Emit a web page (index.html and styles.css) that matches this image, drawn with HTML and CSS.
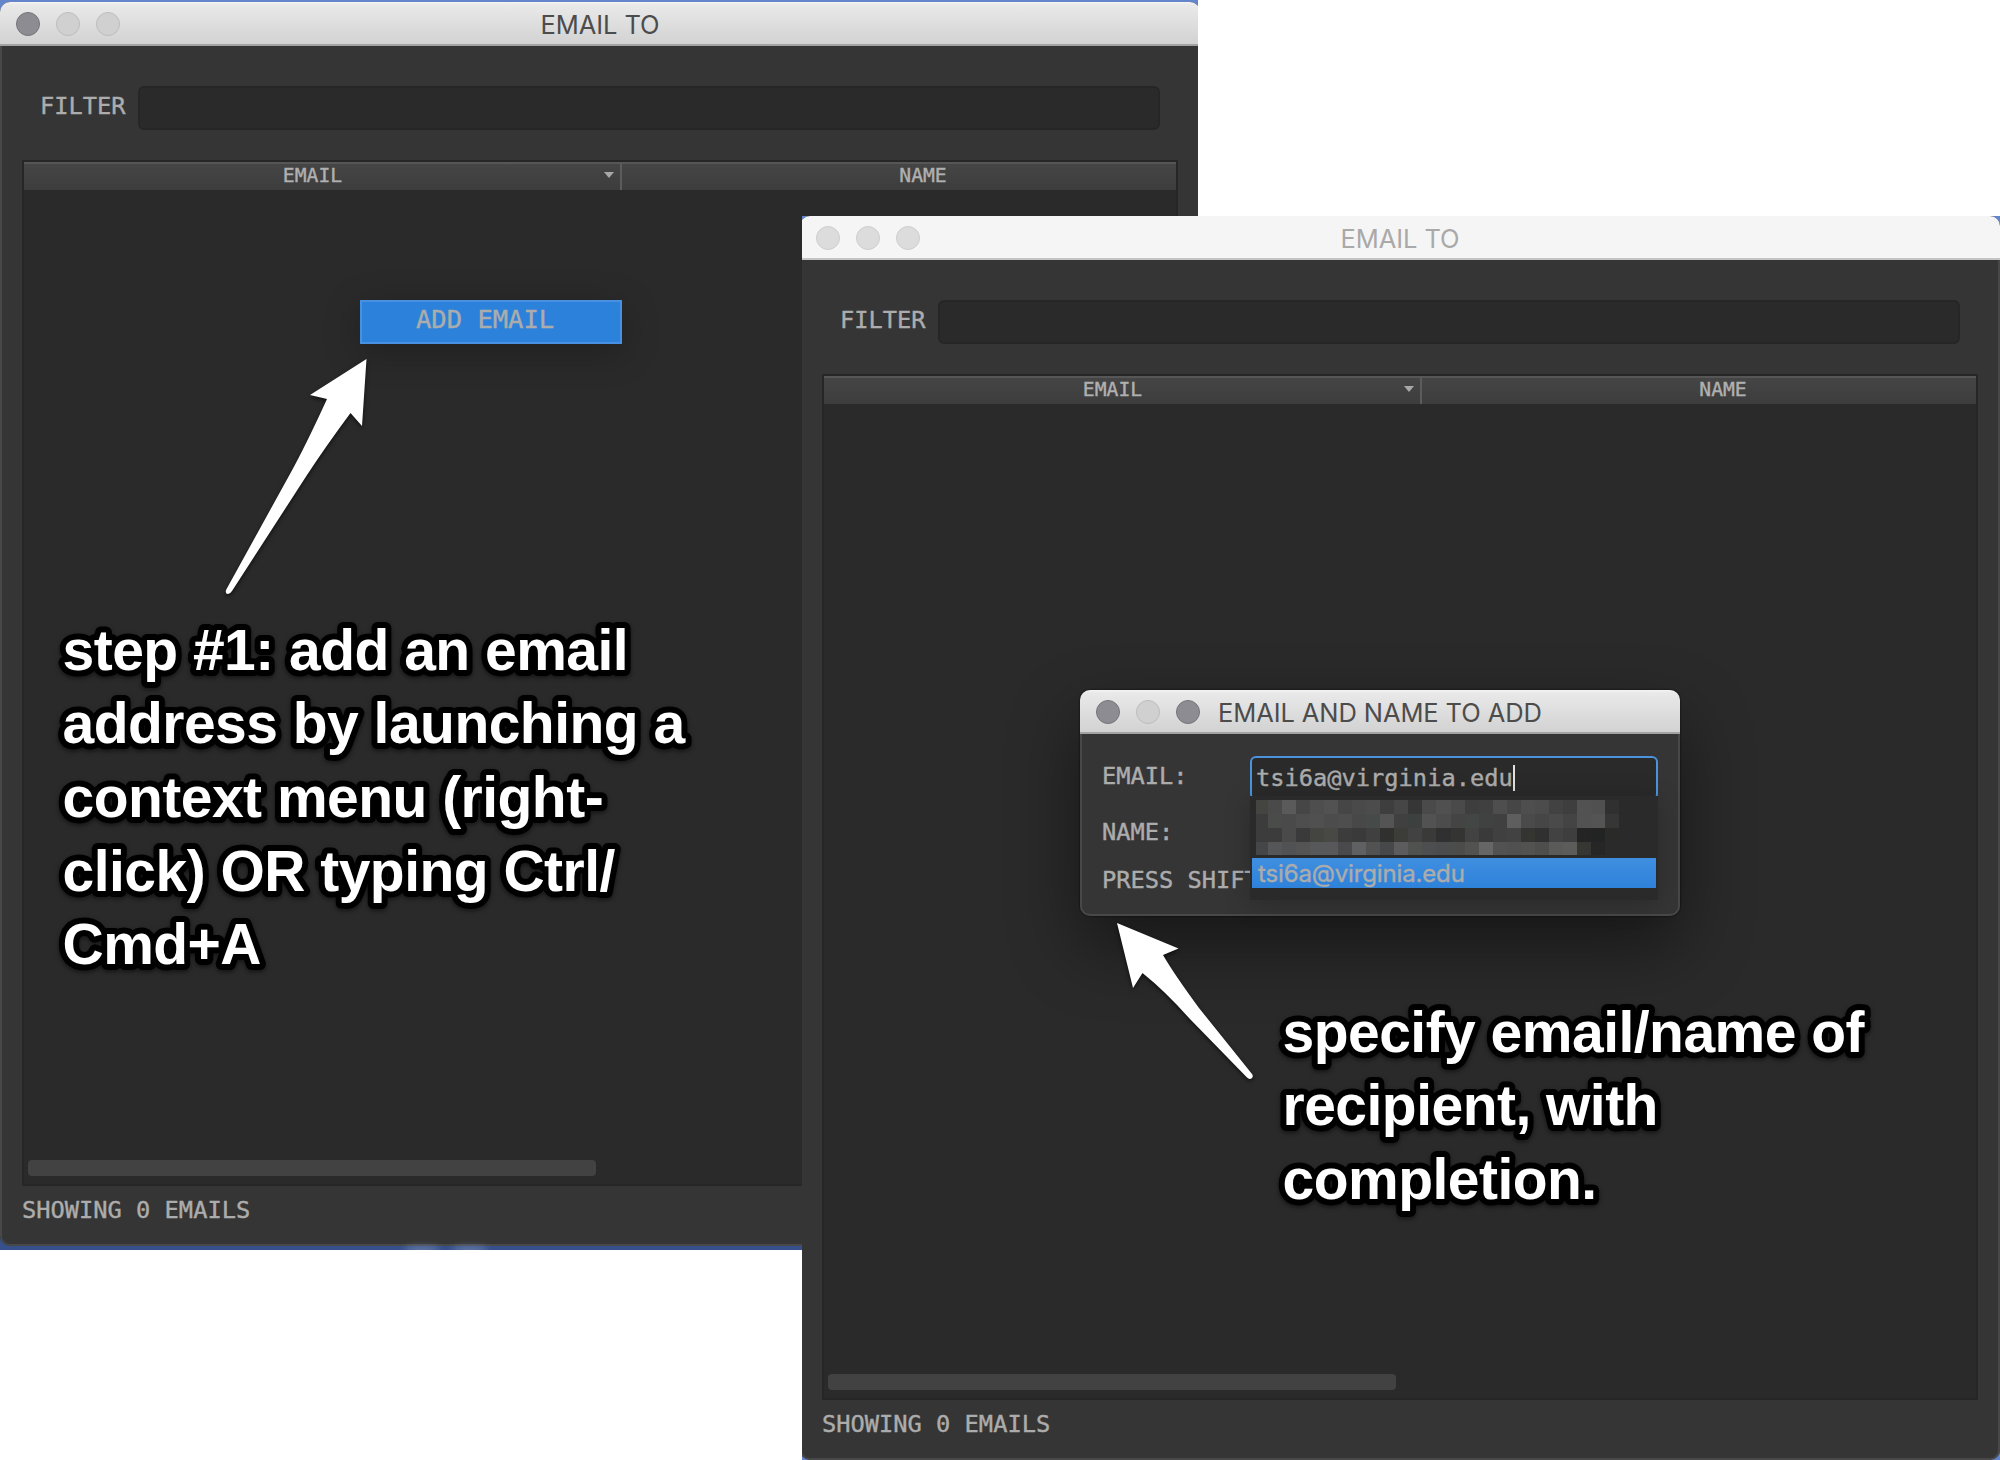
FILE: index.html
```html
<!DOCTYPE html>
<html lang="en">
<head>
<meta charset="utf-8">
<title>Email To</title>
<link rel="stylesheet" href="styles.css">
</head>
<body>
<main class="canvas">
  <section class="shot shot-first">
    <div class="window">
      <header class="titlebar">
        <div class="lights"><i class="light on"></i><i class="light"></i><i class="light"></i></div>
        <h1 class="title">EMAIL TO</h1>
      </header>
      <div class="body">
        <div class="filter"><span class="mono">FILTER</span><div class="field"></div></div>
        <div class="table">
          <div class="thead">
            <div class="th th-email">EMAIL<i class="sort"></i></div>
            <div class="th th-name">NAME</div>
          </div>
          <div class="rows"></div>
          <div class="scroll"></div>
        </div>
        <footer class="mono status">SHOWING 0 EMAILS</footer>
      </div>
    </div>
    <i class="glow glow-a"></i><i class="glow glow-b"></i>
  </section>
  <div class="menu">ADD EMAIL</div>

  <section class="shot shot-second">
    <div class="window">
      <header class="titlebar inactive">
        <div class="lights"><i class="light"></i><i class="light"></i><i class="light"></i></div>
        <h1 class="title">EMAIL TO</h1>
      </header>
      <div class="body">
        <div class="filter"><span class="mono">FILTER</span><div class="field"></div></div>
        <div class="table">
          <div class="thead">
            <div class="th th-email">EMAIL<i class="sort"></i></div>
            <div class="th th-name">NAME</div>
          </div>
          <div class="rows"></div>
          <div class="scroll"></div>
        </div>
        <footer class="mono status">SHOWING 0 EMAILS</footer>
      </div>
    </div>
  </section>

  <section class="dialog">
    <header class="titlebar dialog-bar">
      <div class="lights"><i class="light on"></i><i class="light"></i><i class="light on"></i></div>
      <h2 class="title dialog-title">EMAIL AND NAME TO ADD</h2>
    </header>
    <div class="form">
      <div class="form-row row-email">
        <label class="mono">EMAIL:</label>
        <div class="entry mono"><span>tsi6a@virginia.edu</span><i class="caret"></i></div>
      </div>
      <div class="mono row-name">NAME:</div>
      <div class="mono row-hint">PRESS SHIFT</div>
    </div>
    <div class="popup">
      <div class="mosaic" id="mosaic"></div>
      <div class="option"><span>tsi6a@virginia.edu</span></div>
    </div>
  </section>

  <svg class="annotations" width="2000" height="1460" viewBox="0 0 2000 1460">
    <g class="arrows">
      <path d="M366.5 359 L310 395 L327 399 Q305 447 290 474 L226 590 Q225 594 228 594 Q230 594 232 591 L307 475 Q326 446 350.5 413 L362 426 Z"/>
      <path d="M1117 923 L1133 988 L1142.500 973 Q1165 991 1189 1018 L1247 1077.500 Q1249.500 1080 1252 1078 Q1253.500 1076 1252 1074 L1199 1008 Q1174 974 1163 955 L1178.500 948.500 Z"/>
    </g>
    <text class="note" y="669.5">
      <tspan x="62.500">step #1: add an email</tspan>
      <tspan x="62.500" dy="73.670">address by launching a</tspan>
      <tspan x="62.500" dy="73.670">context menu (right-</tspan>
      <tspan x="62.500" dy="73.670">click) OR typing Ctrl/</tspan>
      <tspan x="62.500" dy="73.670">Cmd+A</tspan>
    </text>
    <text class="note" y="1051.5">
      <tspan x="1282.500">specify email/name of</tspan>
      <tspan x="1282.500" dy="73.670">recipient, with</tspan>
      <tspan x="1282.500" dy="73.670">completion.</tspan>
    </text>
  </svg>
</main>
<script src="mosaic.js"></script>
</body>
</html>
```
FILE: styles.css
```css
* { box-sizing: border-box; }

body {
  margin: 0;
  background: #fff;
}

.canvas {
  position: relative;
  width: 2000px;
  height: 1460px;
  overflow: hidden;
}

.shot {
  position: absolute;
  overflow: hidden;
  background: #6484cb;
}

.shot-first {
  left: 0;
  top: 0;
  width: 1198px;
  height: 1250px;
  padding-top: 2px;
  background: linear-gradient(#6484cb 0 50%, #35508a 50%);
}

.shot-second {
  left: 802px;
  top: 216px;
  width: 1198px;
  height: 1244px;
}

.shot-second .window { margin-left: -2px; }

.glow {
  position: absolute;
  top: 1247px;
  width: 36px;
  height: 5px;
  background: #7687ad;
  border-radius: 50%;
  filter: blur(3px);
}

.glow-a { left: 404px; }
.glow-b { left: 452px; }

.window {
  width: 1200px;
  height: 1244px;
  display: flex;
  flex-direction: column;
  border-radius: 10px;
  overflow: hidden;
  background: #353535;
}

.titlebar {
  flex: none;
  display: grid;
  grid-template-columns: 1fr auto 1fr;
  align-items: center;
  height: 44px;
  padding: 2px 0 0 16px;
  border-bottom: 2px solid #a2a2a2;
  background: linear-gradient(#f4f4f4 0, #e9e9e9 3px, #d2d2d2 100%);
}

.titlebar.inactive {
  background: #f5f5f5;
  border-bottom-color: #c4c4c4;
}

.lights {
  display: flex;
  gap: 16px;
}

.light {
  width: 24px;
  height: 24px;
  border: 1.5px solid #bdbdbd;
  border-radius: 50%;
  background: #d0d0d0;
}

.light.on {
  background: #8d8c92;
  border-color: #76757b;
}

.inactive .light {
  background: #dcdcdc;
  border-color: #cecece;
}

.title {
  margin: 0;
  padding: 2px 16px 0 0;
  font: 400 25.5px/36px Inter, "Open Sans", sans-serif;
  letter-spacing: -0.1px;
  color: #4c4c4c;
}

.inactive .title { color: #a9a9a9; }

.body {
  flex: 1;
  padding: 40px 20px 0;
  border: 2px solid #484848;
  border-top: 0;
  border-radius: 0 0 10px 10px;
}

.mono {
  font: 23.7px/28px "DejaVu Sans Mono", monospace;
  -webkit-text-stroke: 0.4px currentColor;
  color: #acacac;
  white-space: pre;
}

.filter {
  display: flex;
  justify-content: space-between;
  padding: 0 18px;
}

.filter .mono { padding-top: 6px; }

.field {
  width: 1022px;
  height: 44px;
  border: 2px solid #262626;
  border-radius: 6px;
  background: #2a2a2a;
}

.filter .field { margin-right: 0; }

.table {
  display: flex;
  flex-direction: column;
  height: 1026px;
  margin-top: 30px;
  border: 2px solid #262626;
  background: #2a2a2a;
}

.thead {
  display: flex;
  height: 28px;
  overflow: hidden;
}

.th {
  flex: none;
  position: relative;
  border-top: 2px solid #565656;
  background: linear-gradient(#454545, #3d3d3d);
  font: 19.7px/24px "DejaVu Sans Mono", monospace;
  -webkit-text-stroke: 0.4px currentColor;
  text-align: center;
  color: #b0b0b0;
}

.th-email {
  width: 598px;
  padding-right: 19px;
  border-right: 2px solid #5c5c5c;
}

.th-name { width: 602px; }

.sort {
  position: absolute;
  right: 6px;
  top: 8px;
  border: 5px solid transparent;
  border-top: 6px solid #a8a8a8;
  border-bottom: 0;
}

.rows { flex: 1; }

.scroll {
  width: 568px;
  height: 16px;
  margin: 0 0 8px 4px;
  border-radius: 4px;
  background: #424242;
}

.status { padding-top: 10px; }

.menu {
  position: absolute;
  left: 360px;
  top: 300px;
  width: 262px;
  height: 44px;
  padding-left: 54px;
  border: 2px solid #4790e2;
  background: #2c82da;
  box-shadow: 0 8px 36px rgba(0, 0, 0, 0.25);
  font: 25.5px/34px "DejaVu Sans Mono", monospace;
  -webkit-text-stroke: 0.4px currentColor;
  color: #acacac;
}

.dialog {
  position: absolute;
  left: 1080px;
  top: 690px;
  width: 600px;
  height: 226px;
  display: flex;
  flex-direction: column;
  border-radius: 10px;
  background: #353535;
  box-shadow: 0 30px 70px rgba(0, 0, 0, 0.45), 0 0 2px #000;
}

.dialog-bar {
  display: flex;
  gap: 18px;
  border-radius: 10px 10px 0 0;
}

.form {
  flex: 1;
  padding: 22px 20px 0 20px;
  border: 2px solid #484848;
  border-top: 0;
  border-radius: 0 0 10px 10px;
}

.form-row {
  display: flex;
  justify-content: space-between;
}

.row-email label { padding-top: 6px; }

.entry {
  display: flex;
  align-items: center;
  width: 408px;
  height: 44px;
  padding-left: 4px;
  border: 2px solid #4b93dc;
  border-radius: 6px;
  background: #2a2a2a;
}

.caret {
  width: 2px;
  height: 26px;
  background: #e0e0e0;
}

.row-name { padding-top: 18px; }
.row-hint { padding-top: 20px; }

.popup {
  position: absolute;
  left: 170px;
  top: 106px;
  width: 408px;
  height: 104px;
  padding: 4px 2px 0;
  background: #2a2a2a;
  box-shadow: 0 4px 24px rgba(0, 0, 0, 0.22);
}

.mosaic {
  display: grid;
  grid-template-columns: 11.5px repeat(25, 14.08px);
  grid-template-rows: 14px 14px 14px 13px;
  margin: 0 0 3px 4px;
}

.option {
  height: 30px;
  padding-left: 6px;
  background: linear-gradient(#3f8fe0, #2e82da);
  font: 24px/31px Inter, sans-serif;
  -webkit-text-stroke: 0.4px currentColor;
  letter-spacing: -0.15px;
  color: #acacac;
}

.annotations {
  position: absolute;
  left: 0;
  top: 0;
  fill: #fff;
}

.arrows { filter: drop-shadow(0 2px 2px rgba(0, 0, 0, 0.6)); }

.note {
  font: 700 57px "Liberation Sans", sans-serif;
  letter-spacing: -0.52px;
  stroke: #000;
  stroke-width: 12px;
  stroke-linejoin: round;
  paint-order: stroke fill;
  filter: drop-shadow(0 2px 2px rgba(0, 0, 0, 0.5));
}
```
FILE: mosaic.js
```js
// Shades of the pixelated completion entries, one string per row.
const rows = [
  "444440 4a4a4a 5a5a5a 464646 4e4e4e 525252 464646 4a4a4a 4c4c4c 3e3e3e 464646 363636 4a4a4a 505050 4a4a4a 3e3e3e 404040 4e4e4e 464646 4e4e4e 4c4c4c 424242 3e3e3e 525252 505050 303030",
  "3c3c3c 4a4c4a 4a4a4a 4e4e4e 505050 4c4c4c 4e4e4e 484848 464a48 545454 404040 3c403e 525252 4c4c4c 444444 424644 404242 404040 5e5e5e 4a4a4a 464646 4a4a4a 444444 525252 545454 363636",
  "3c3c3c 3c3c3c 4a4a4a 3a3a3a 444440 484844 3c3c3c 3a3a3a 404040 30302e 3c3c38 424242 3a3a38 303030 343432 424242 3a3a3a 404040 424242 343430 303030 424242 3e3e3e 242424 222424 2a2a28",
  "444648 545658 505254 545454 56585a 58585a 4a4a4c 5e6062 525252 46484a 5c5c5e 505250 4c4e50 4a4c4e 4c4c4a 525250 666666 525252 505050 525250 4e4e4c 5a5a58 5c5c5a 363632 262626 2a2a2a"
];
const mosaic = document.getElementById("mosaic");
for (const shade of rows.join(" ").split(" ")) {
  const cell = document.createElement("i");
  cell.style.background = "#" + shade;
  mosaic.append(cell);
}
```
